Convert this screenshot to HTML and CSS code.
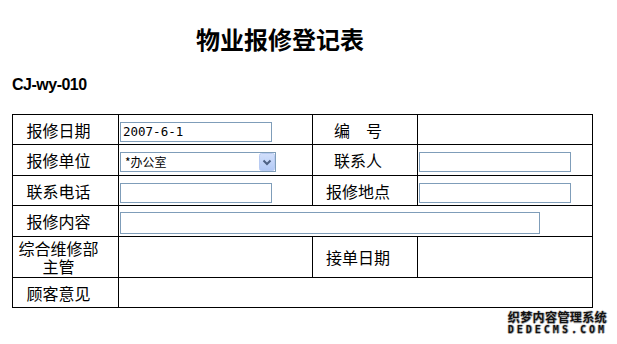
FILE: index.html
```html
<!DOCTYPE html>
<html lang="zh-CN">
<head>
    <meta charset="UTF-8">
    <title>物业报修登记表</title>
    <link rel="stylesheet" href="styles.css">
</head>
<body>
    <div class="page">
        <h2 class="title">物业报修登记表</h2>
        <div class="code">CJ-wy-010</div>
        <table class="form">
            <colgroup>
                <col class="c1"><col class="c2"><col class="c3"><col class="c4">
            </colgroup>
            <tr class="r30">
                <td class="lbl">报修日期</td>
                <td><input type="text" class="inp" value="2007-6-1"></td>
                <td class="lbl">编　号</td>
                <td></td>
            </tr>
            <tr class="r31">
                <td class="lbl">报修单位</td>
                <td>
                    <span class="sel">
                        <select><option>*办公室</option></select>
                        <svg viewBox="0 0 16 18" width="16" height="18">
                            <defs>
                                <linearGradient id="btn" x1="0" y1="0" x2="0" y2="1">
                                    <stop offset="0" stop-color="#d3e0fb"/>
                                    <stop offset="1" stop-color="#b2c9f6"/>
                                </linearGradient>
                            </defs>
                            <rect x="0.5" y="0.5" width="15" height="17" rx="2" fill="url(#btn)" stroke="#b8cbf2"/>
                            <path d="M4.5 7.5 L8 11 L11.5 7.5" fill="none" stroke="#4d6185" stroke-width="2"/>
                        </svg>
                    </span>
                </td>
                <td class="lbl">联系人</td>
                <td><input type="text" class="inp"></td>
            </tr>
            <tr class="r30">
                <td class="lbl">联系电话</td>
                <td><input type="text" class="inp"></td>
                <td class="lbl">报修地点</td>
                <td><input type="text" class="inp"></td>
            </tr>
            <tr class="r31">
                <td class="lbl">报修内容</td>
                <td colspan="3"><input type="text" class="inp long"></td>
            </tr>
            <tr class="r41">
                <td class="lbl">综合维修部主管</td>
                <td></td>
                <td class="lbl">接单日期</td>
                <td></td>
            </tr>
            <tr class="r30">
                <td class="lbl">顾客意见</td>
                <td colspan="3"></td>
            </tr>
        </table>
        <div class="mark">
            <div class="mark-cn">织梦内容管理系统</div>
            <div class="mark-en">DEDECMS.COM</div>
        </div>
    </div>
</body>
</html>
```

FILE: styles.css
```css
body {
    margin: 0;
    background-color: #fff;
    color: #000;
    font-family: "Noto Sans CJK SC", sans-serif;
}
.page {
    padding: 27px 0 0 12px;
}
.title {
    width: 536px;
    margin: 0;
    font-size: 24px;
    line-height: 24px;
    font-weight: 700;
    text-align: center;
}
.code {
    margin-top: 25px;
    font: bold 16px/18px "Liberation Sans", Arial, sans-serif;
    letter-spacing: -0.5px;
}
.form {
    margin-top: 20px;
    width: 580px;
    border-collapse: collapse;
    table-layout: fixed;
}
.c1 { width: 106px; }
.c2 { width: 194px; }
.c3 { width: 105px; }
.c4 { width: 175px; }
.r30 { height: 30px; }
.r31 { height: 31px; }
.r41 { height: 41px; }
.form td {
    border: 1px solid #000;
    padding: 0 1px;
    vertical-align: middle;
}
.form td.lbl {
    padding: 0 14px 0 0;
    text-align: center;
    font-size: 16px;
    line-height: 18px;
}
.inp {
    box-sizing: border-box;
    width: 152px;
    height: 20px;
    margin: 0;
    padding: 0 2px;
    border: 1px solid #7f9db9;
    font: 12.5px "DejaVu Sans Mono", monospace;
    vertical-align: middle;
}
.inp.long {
    width: 420px;
    height: 22px;
}
.sel {
    position: relative;
    display: inline-block;
    width: 156px;
    height: 20px;
    vertical-align: middle;
}
.sel select {
    display: block;
    box-sizing: border-box;
    width: 100%;
    height: 100%;
    margin: 0;
    padding: 0 0 0 4px;
    border: 1px solid #7f9db9;
    background-color: #fff;
    appearance: none;
    font: 12px/16px "Noto Sans CJK SC", sans-serif;
}
.sel svg {
    position: absolute;
    right: 1px;
    top: 1px;
    pointer-events: none;
}
.mark {
    width: 595px;
    margin-top: 3px;
    text-align: right;
    font-weight: bold;
    color: #111;
    text-shadow: 1px 0 0 #aaa, 0 1px 0 #aaa, -1px 0 0 #ddd, 0 -1px 0 #ddd;
}
.mark-cn {
    font-size: 12px;
    line-height: 12px;
    letter-spacing: 0.4px;
}
.mark-en {
    font: bold 10px/11px "DejaVu Sans Mono", monospace;
    letter-spacing: 3px;
    margin-top: 1px;
}
```
